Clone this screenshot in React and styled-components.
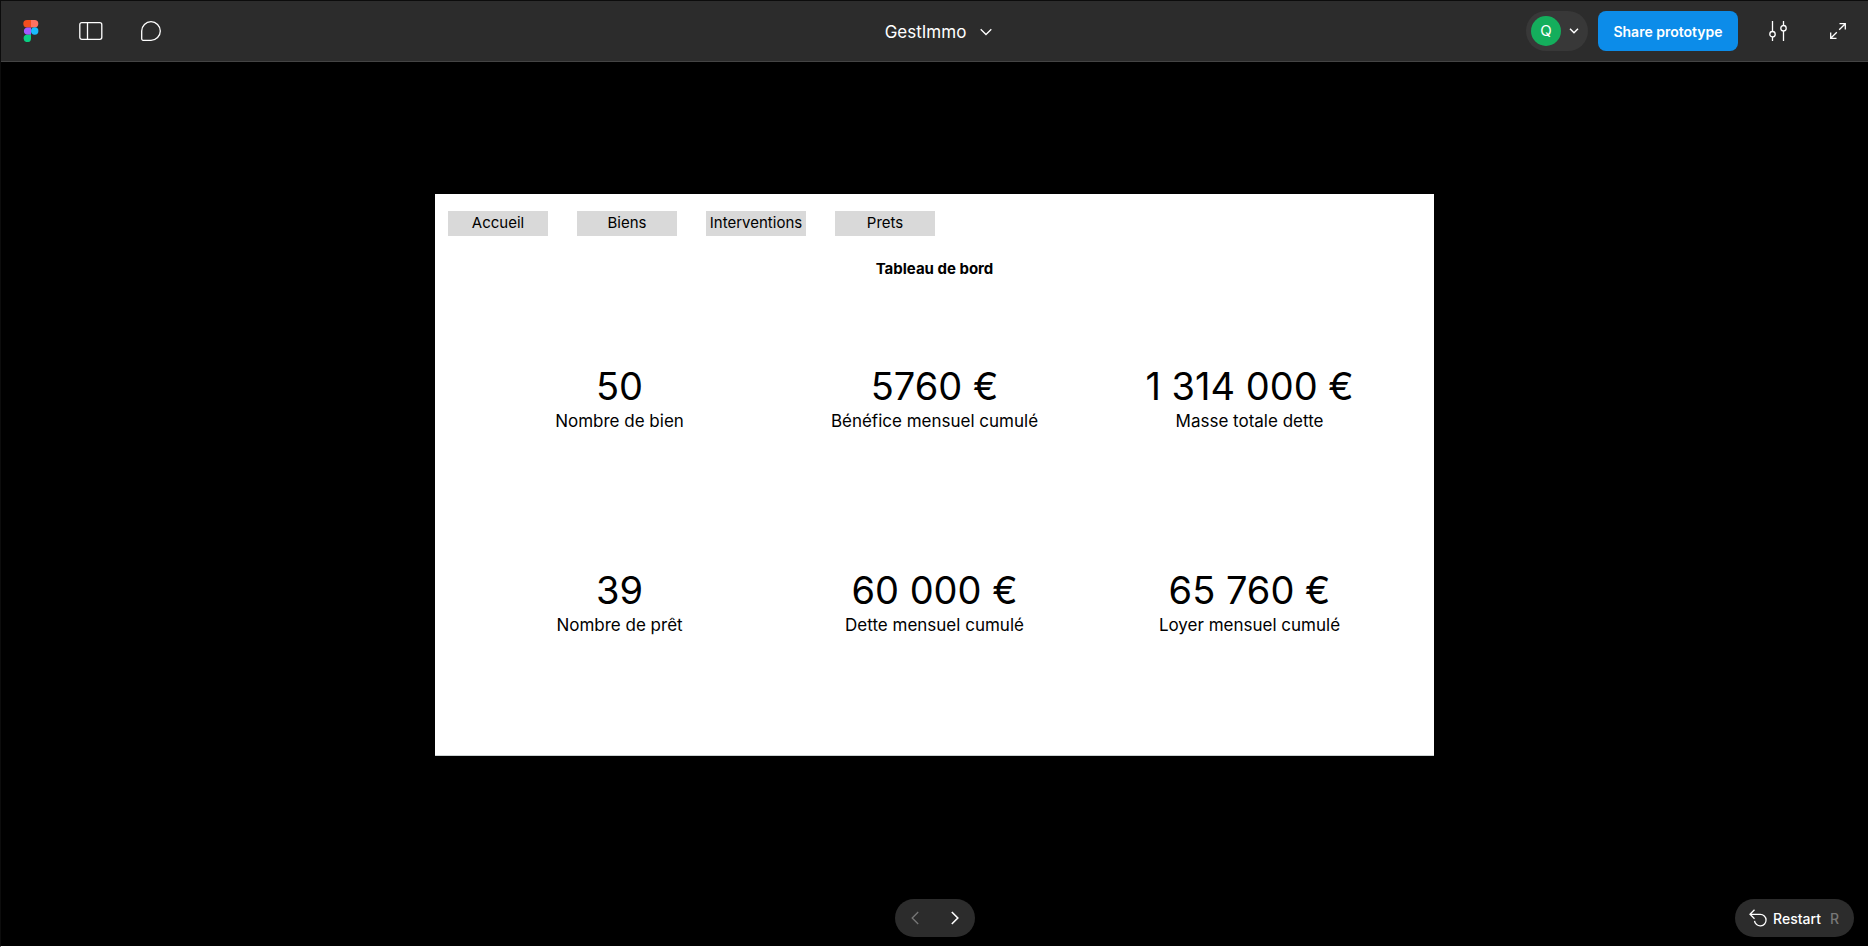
import React from "react";
import styled, { createGlobalStyle } from "styled-components";

const GlobalStyle = createGlobalStyle`
  *, *::before, *::after { box-sizing: border-box; }
  body {
    margin: 0;
    background: #000;
    font-family: Inter, "Liberation Sans", sans-serif;
  }
  button { font: inherit; color: inherit; border: 0; padding: 0; cursor: pointer; background: none; }
  svg { display: block; }
`;

const Page = styled.div`
  min-height: 100vh;
  display: flex;
  flex-direction: column;
  background: #000;
  border-left: 1px solid #0c0c0c;
  border-bottom: 1px solid #fff;
`;

const TopBar = styled.header`
  height: 62px;
  display: grid;
  grid-template-columns: 1fr auto 1fr;
  align-items: center;
  background: #2c2c2c;
  border-top: 1px solid #0c0c0c;
  border-bottom: 1px solid #444;
  color: #fff;
`;

const BarGroup = styled.div`
  display: flex;
  align-items: center;
  justify-content: ${(p) => (p.$end ? "flex-end" : "flex-start")};
`;

const IconButton = styled.button`
  width: 60px;
  height: 60px;
  display: grid;
  place-items: center;
`;

const FileButton = styled.button`
  display: flex;
  align-items: center;
  gap: 14px;
  padding: 2px 0 0 8px;
  font-size: 17px;
  line-height: 24px;
`;

const AccountButton = styled.button`
  width: 62px;
  height: 40px;
  padding-left: 5px;
  margin-right: 10px;
  display: flex;
  align-items: center;
  gap: 8px;
  border-radius: 20px;
  background: #383838;
`;

const Avatar = styled.span`
  width: 30px;
  height: 30px;
  border-radius: 50%;
  background: #14ae5c;
  font-size: 15px;
  line-height: 30px;
  text-align: center;
`;

const ShareButton = styled.button`
  width: 140px;
  height: 40px;
  margin-right: 10px;
  border-radius: 8px;
  background: #0c8ce9;
  font-size: 14px;
  font-weight: 600;
`;

const Stage = styled.main`
  flex: 1;
  display: flex;
  align-items: center;
  justify-content: center;
`;

const Prototype = styled.section`
  width: 100%;
  max-width: 999px;
  min-height: 562px;
  padding: 17px 13px 0;
  background: #fff;
  color: #000;
  border-bottom: 1px solid #ccd3d3;
`;

const Nav = styled.nav`
  display: flex;
  gap: 29px;
`;

const NavLink = styled.a`
  width: 100px;
  padding-bottom: 1px;
  background: #d9d9d9;
  color: #000;
  font-size: 15px;
  line-height: 24px;
  text-align: center;
  text-decoration: none;
`;

const Title = styled.h1`
  margin: 21px 0 0;
  font-size: 15px;
  line-height: 24px;
  font-weight: 700;
  text-align: center;
`;

const Stats = styled.dl`
  margin: 82px 0 0;
  padding: 0 14px;
  display: grid;
  grid-template-columns: repeat(3, 1fr);
  row-gap: 134px;
  text-align: center;
`;

const Stat = styled.div`
  display: flex;
  flex-direction: column-reverse;
`;

const StatLabel = styled.dt`
  font-size: 17px;
  line-height: 24px;
`;

const StatValue = styled.dd`
  margin: 0;
  font-size: 38px;
  line-height: 46px;
`;

const BottomBar = styled.footer`
  display: grid;
  grid-template-columns: 1fr auto 1fr;
  padding: 11px 14px 9px;
  color: #fff;
`;

const Pager = styled.div`
  grid-column: 2;
  height: 38px;
  display: flex;
  border-radius: 19px;
  background: #2c2c2c;
`;

const PagerButton = styled.button`
  width: 40px;
  display: grid;
  place-items: center;
  &:disabled { color: #777; }
`;

const RestartButton = styled.button`
  justify-self: end;
  height: 38px;
  padding: 0 15px 0 14px;
  display: flex;
  align-items: center;
  gap: 6px;
  border-radius: 19px;
  background: #2c2c2c;
  font-size: 14px;
  font-weight: 500;
`;

const KeyHint = styled.kbd`
  margin-left: 3px;
  font: inherit;
  color: #777;
`;

const Glyph = ({ w, h, d, width = 1.3, children }) => (
  <svg width={w} height={h} viewBox={`0 0 ${w} ${h}`} fill="none" stroke="currentColor" strokeWidth={width} aria-hidden="true">
    {d && <path d={d} />}
    {children}
  </svg>
);

const FigmaLogo = () => (
  <svg width="16" height="22" viewBox="0 0 16 22" aria-hidden="true">
    <path d="M4 0h4v7.4H4A3.7 3.7 0 0 1 4 0z" fill="#f24e1e" />
    <path d="M8 0h3.6a3.7 3.7 0 0 1 0 7.4H8z" fill="#ff7262" />
    <path d="M4 7.4h4v7.3H4a3.7 3.7 0 0 1 0-7.3z" fill="#a259ff" />
    <circle cx="11.7" cy="11" r="3.7" fill="#1abcfe" />
    <path d="M4 14.7h4v3.6a3.7 3.7 0 1 1-4-3.6z" fill="#0acf83" />
  </svg>
);

const stats = [
  ["Nombre de bien", "50"],
  ["Bénéfice mensuel cumulé", "5760 €"],
  ["Masse totale dette", "1 314 000 €"],
  ["Nombre de prêt", "39"],
  ["Dette mensuel cumulé", "60 000 €"],
  ["Loyer mensuel cumulé", "65 760 €"],
];

export default function App() {
  return (
    <Page>
      <GlobalStyle />
      <TopBar>
        <BarGroup>
          <IconButton aria-label="Figma"><FigmaLogo /></IconButton>
          <IconButton aria-label="Sidebar">
            <Glyph w={24} h={18}>
              <rect x="0.8" y="0.7" width="22" height="16.6" rx="2" />
              <path d="M8.5 .7v16.6" />
            </Glyph>
          </IconButton>
          <IconButton aria-label="Comments">
            <Glyph w={20} h={20} d="M10 .7a9.3 9.3 0 1 1 0 18.6H2.2a1.5 1.5 0 0 1-1.5-1.5V10A9.3 9.3 0 0 1 10 .7z" />
          </IconButton>
        </BarGroup>
        <FileButton>
          GestImmo
          <Glyph w={12} h={8} d="M.7 1.2 6 6.5l5.3-5.3" />
        </FileButton>
        <BarGroup $end>
          <AccountButton aria-label="Account">
            <Avatar>Q</Avatar>
            <Glyph w={10} h={6} width={1.5} d="M1 .8 5 4.8l4-4" />
          </AccountButton>
          <ShareButton>Share prototype</ShareButton>
          <IconButton aria-label="Options">
            <Glyph w={18} h={20} d="M3.5 0v10.5M3.5 16v4M14.5 0v4.5M14.5 10v10">
              <circle cx="3.5" cy="13.2" r="2.7" />
              <circle cx="14.5" cy="7.2" r="2.7" />
            </Glyph>
          </IconButton>
          <IconButton aria-label="Full screen">
            <Glyph w={16} h={16} d="M9.5 .7h5.8v5.8M15.3.7 9.2 6.8M.7 9.5v5.8h5.8M.7 15.3l6.1-6.1" />
          </IconButton>
        </BarGroup>
      </TopBar>
      <Stage>
        <Prototype>
          <Nav>
            {["Accueil", "Biens", "Interventions", "Prets"].map((name) => (
              <NavLink key={name} href="#">{name}</NavLink>
            ))}
          </Nav>
          <Title>Tableau de bord</Title>
          <Stats>
            {stats.map(([label, value]) => (
              <Stat key={label}>
                <StatLabel>{label}</StatLabel>
                <StatValue>{value}</StatValue>
              </Stat>
            ))}
          </Stats>
        </Prototype>
      </Stage>
      <BottomBar>
        <Pager>
          <PagerButton aria-label="Previous" disabled>
            <Glyph w={8} h={14} d="M7.2 1 1.2 7l6 6" />
          </PagerButton>
          <PagerButton aria-label="Next">
            <Glyph w={8} h={14} width={1.6} d="M.8 1l6 6-6 6" />
          </PagerButton>
        </Pager>
        <RestartButton>
          <Glyph w={18} h={18} d="M5.5.8 1 5.3l4.5 4.5M1 5.3h10.3a5.8 5.8 0 1 1-5.8 6.5" />
          Restart
          <KeyHint>R</KeyHint>
        </RestartButton>
      </BottomBar>
    </Page>
  );
}
